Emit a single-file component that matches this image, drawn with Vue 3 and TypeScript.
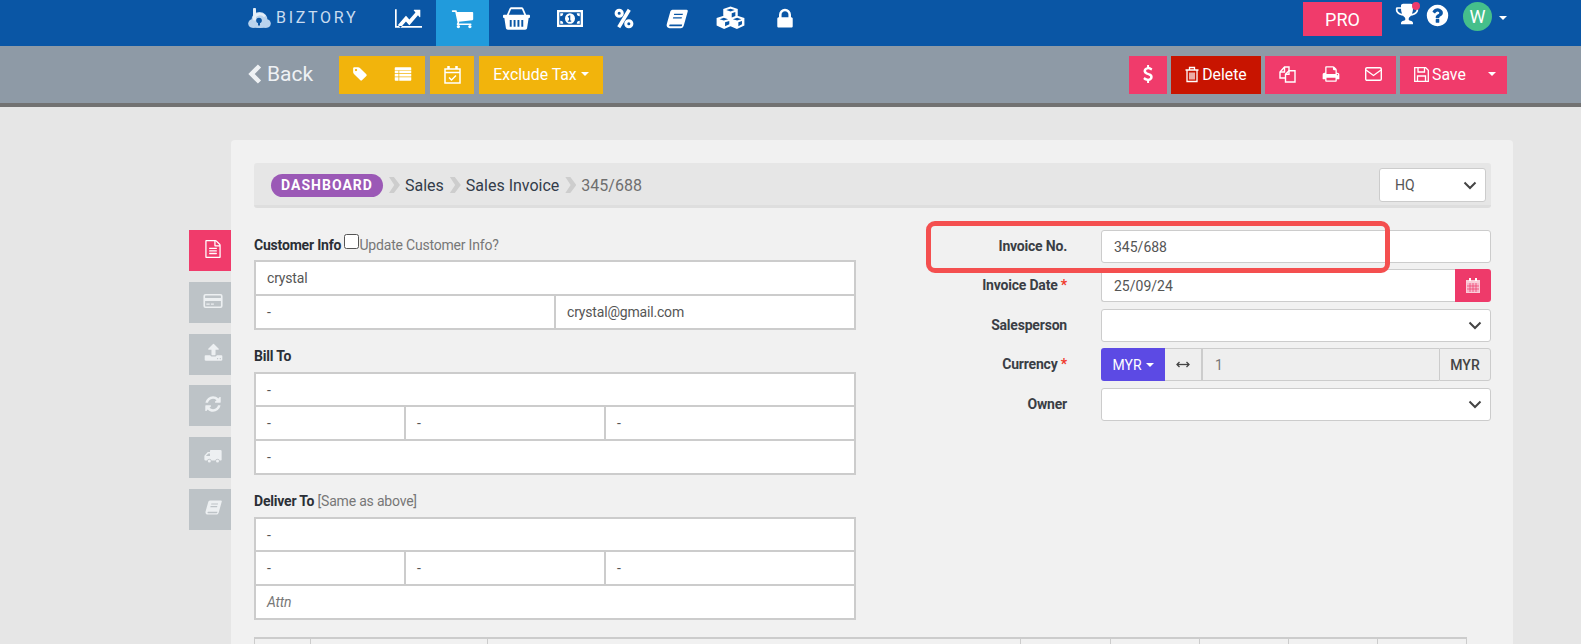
<script setup lang="ts">
import { h } from 'vue'

const paths: Record<string, [string, string]> = {
  chart: ['-128 370 2048 1240', 'M1920 1472v128h-2048v-1216h128v1088h1920zm-128-1024v435q0 21-19.5 29.5t-35.5-7.5l-121-121-633 633q-10 10-23 10t-23-10l-233-233-416 416-192-192 585-585q10-10 23-10t23 10l233 233 464-464-121-121q-16-16-7.5-35.5t29.5-19.5h435q14 0 23 9t9 23z'],
  cart: ['0 0 1792 1792', 'M704 1536q0 52-38 90t-90 38-90-38-38-90 38-90 90-38 90 38 38 90zm896 0q0 52-38 90t-90 38-90-38-38-90 38-90 90-38 90 38 38 90zm128-1088v512q0 24-16.5 42.5t-40.5 21.5l-1044 122q13 60 13 70 0 16-24 64h920q26 0 45 19t19 45-19 45-45 19h-1024q-26 0-45-19t-19-45q0-11 8-31.5t16-36 21.5-40 15.5-29.5l-177-823h-204q-26 0-45-19t-19-45 19-45 45-19h256q16 0 28.5 6.5t19.5 15.5 13 24.5 8 26 5.5 29.5 4.5 26h1201q26 0 45 19t19 45z'],
  lock: ['0 0 1792 1792', 'M640 768h512v-192q0-106-75-181t-181-75-181 75-75 181v192zm832 96v576q0 40-28 68t-68 28h-960q-40 0-68-28t-28-68v-576q0-40 28-68t68-28h32v-192q0-184 132-316t316-132 316 132 132 316v192h32q40 0 68 28t28 68z'],
  tag: ['0 0 1792 1792', 'M576 448q0-53-37.5-90.5t-90.5-37.5-90.5 37.5-37.5 90.5 37.5 90.5 90.5 37.5 90.5-37.5 37.5-90.5zm1067 576q0 53-37 90l-491 492q-39 37-91 37-53 0-90-37l-715-716q-38-37-64.5-101t-26.5-117v-416q0-52 38-90t90-38h416q53 0 117 26.5t102 64.5l715 714q37 39 37 91z'],
  dollar: ['0 0 1792 1792', 'M1362 1185q0 153-99.5 263.5t-258.5 136.5v175q0 14-9 23t-23 9h-135q-13 0-22.5-9.5t-9.5-22.5v-175q-66-9-127.5-31t-101.5-44.5-74-48-46.5-37.5-17.5-18q-17-21-2-41l103-135q7-10 23-12 15-2 24 9l2 2q113 99 243 125 37 8 74 8 81 0 142.5-43t61.5-122q0-28-15-53t-33.5-42-58.5-37.5-66-32-80-32.5q-39-16-61.5-25t-61.5-26.5-62.5-31-56.5-35.5-53.5-42.5-43.5-49-35.5-58-21-66.5-8.5-78q0-138 98-242t255-134v-180q0-13 9.5-22.5t22.5-9.5h135q14 0 23 9t9 23v176q57 6 110.5 23t87 33.5 63.5 37.5 39 29 15 14q17 18 5 38l-81 146q-8 15-23 16-14 3-27-7-3-3-14.5-12t-39-26.5-58.5-32-74.5-26-85.5-11.5q-95 0-155 43t-60 111q0 26 8.5 48t29.5 41.5 39.5 33 56 31 60.5 27 70 27.5q53 20 81 31.5t76 35 75.5 42.5 62 50 53 63.5 31.5 76.5 13 94z'],
  print: ['0 0 1792 1792', 'M448 1536h896v-256h-896v256zm0-640h896v-384h-160q-40 0-68-28t-28-68v-160h-640v640zm1152 64q0-26-19-45t-45-19-45 19-19 45 19 45 45 19 45-19 19-45zm128 0v416q0 13-9.5 22.5t-22.5 9.5h-224v160q0 40-28 68t-68 28h-960q-40 0-68-28t-28-68v-160h-224q-13 0-22.5-9.5t-9.5-22.5v-416q0-79 56.5-135.5t135.5-56.5h64v-544q0-40 28-68t68-28h672q40 0 88 20t76 48l152 152q28 28 48 76t20 88v256h64q79 0 135.5 56.5t56.5 135.5z'],
  trophy: ['0 0 1792 1792', 'M522 883q-74-162-74-371h-256v96q0 78 94.5 162t235.5 113zm1078-275v-96h-256q0 209-74 371 141-29 235.5-113t94.5-162zm128-128v128q0 71-41.5 143t-112 130-173 97.5-215.5 44.5q-42 54-95 95-38 34-52.5 72.5t-14.5 89.5q0 54 30.5 91t97.5 37q75 0 133.5 45.5t58.5 114.5v64q0 14-9 23t-23 9h-832q-14 0-23-9t-9-23v-64q0-69 58.5-114.5t133.5-45.5q67 0 97.5-37t30.5-91q0-51-14.5-89.5t-52.5-72.5q-53-41-95-95-113-5-215.5-44.5t-173-97.5-112-130-41.5-143v-128q0-40 28-68t68-28h288v-96q0-66 47-113t113-47h576q66 0 113 47t47 113v96h288q40 0 68 28t28 68z'],
  help: ['0 0 1792 1792', 'M1024 1376v-192q0-14-9-23t-23-9h-192q-14 0-23 9t-9 23v192q0 14 9 23t23 9h192q14 0 23-9t9-23zm256-672q0-88-55.5-163t-138.5-116-170-41q-243 0-371 213-15 24 8 42l132 100q7 6 19 6 16 0 25-12 53-68 86-92 34-24 86-24 48 0 85.5 26t37.5 59q0 38-20 61t-68 45q-63 28-115.5 86.5t-52.5 125.5v36q0 14 9 23t23 9h192q14 0 23-9t9-23q0-19 21.5-49.5t54.5-49.5q32-18 49-28.5t46-35 44.5-48 28-60.5 12.5-81zm384 192q0 209-103 385.5t-279.5 279.5-385.5 103-385.5-103-279.5-279.5-103-385.5 103-385.5 279.5-279.5 385.5-103 385.5 103 279.5 279.5 103 385.5z'],
  refresh: ['0 0 1792 1792', 'M1639 1056q0 5-1 7-64 268-268 434.5t-478 166.5q-146 0-282.5-55t-243.5-157l-129 129q-19 19-45 19t-45-19-19-45v-448q0-26 19-45t45-19h448q26 0 45 19t19 45-19 45l-137 137q71 66 161 102t187 36q134 0 250-65t186-179q11-17 53-117 8-23 30-23h192q13 0 22.5 9.5t9.5 22.5zm25-800v448q0 26-19 45t-45 19h-448q-26 0-45-19t-19-45 19-45l138-138q-148-137-349-137-134 0-250 65t-186 179q-11 17-53 117-8 23-30 23h-199q-13 0-22.5-9.5t-9.5-22.5v-7q65-268 270-434.5t480-166.5q146 0 284 55.5t245 156.5l130-129q19-19 45-19t45 19 19 45z'],
  upload: ['0 0 1792 1792', 'M1344 1472q0-26-19-45t-45-19-45 19-19 45 19 45 45 19 45-19 19-45zm256 0q0-26-19-45t-45-19-45 19-19 45 19 45 45 19 45-19 19-45zm128-224v320q0 40-28 68t-68 28h-1472q-40 0-68-28t-28-68v-320q0-40 28-68t68-28h427q21 56 70.5 92t110.5 36h256q61 0 110.5-36t70.5-92h427q40 0 68 28t28 68zm-325-648q-17 40-59 40h-256v448q0 26-19 45t-45 19h-256q-26 0-45-19t-19-45v-448h-256q-42 0-59-40-17-39 14-69l448-448q18-19 45-19t45 19l448 448q31 30 14 69z'],
  file: ['0 0 1792 1792', 'M1596 380q28 28 48 76t20 88v1152q0 40-28 68t-68 28h-1344q-40 0-68-28t-28-68v-1600q0-40 28-68t68-28h896q40 0 88 20t76 48zm-444-244v376h376q-10-29-22-41l-313-313q-12-12-41-22zm384 1528v-1024h-416q-40 0-68-28t-28-68v-416h-768v1536h1280zm-1024-864q0-14 9-23t23-9h704q14 0 23 9t9 23v64q0 14-9 23t-23 9h-704q-14 0-23-9t-9-23v-64zm736 224q14 0 23 9t9 23v64q0 14-9 23t-23 9h-704q-14 0-23-9t-9-23v-64q0-14 9-23t23-9h704zm0 256q14 0 23 9t9 23v64q0 14-9 23t-23 9h-704q-14 0-23-9t-9-23v-64q0-14 9-23t23-9h704z'],
  list: ['0 0 24 20', 'M1 1.500a1 1 0 0 1 1-1h20a1 1 0 0 1 1 1V4.500H1zM1 5.500h5v3.600H1zM7 5.500h16v3.600H7zM1 10.100h5v3.600H1zM7 10.100h16v3.600H7zM1 14.700h5v4.800H2a1 1 0 0 1-1-1zM7 14.700h16v3.800a1 1 0 0 1-1 1H7z'],
  card: ['0 0 24 24', 'M3 3.500h18a2.500 2.500 0 0 1 2.500 2.500v12a2.500 2.500 0 0 1-2.500 2.500H3A2.500 2.500 0 0 1 .5 18V6A2.500 2.500 0 0 1 3 3.500zM2.500 6v2.500h19V6a.5.5 0 0 0-.5-.5H3a.5.5 0 0 0-.5.5zM2.500 12v6a.5.5 0 0 0 .5.5h18a.5.5 0 0 0 .5-.5v-6zM4 15h4v1.600H4zM9.500 15H13v1.600H9.500z'],
  truck: ['0 0 24 24', 'M9 4h13a1.500 1.500 0 0 1 1.500 1.500V17a1 1 0 0 1-1 1h-1.600a3 3 0 0 0-5.800 0H10a3 3 0 0 0-5.800 0H2a1.500 1.500 0 0 1-1.500-1.500V11.500L5 6.500h3V5a1 1 0 0 1 1-1zM5.800 8.500L2.800 11.700V12H8V8.500zM7.100 16.500a2 2 0 1 1 0 4 2 2 0 0 1 0-4zM18 16.500a2 2 0 1 1 0 4 2 2 0 0 1 0-4z'],
  book: ['0 0 24 24', 'M7 2h15.500c1 0 1.500.8 1.200 1.700L19.400 19c-.5 1.700-1.500 3-3.500 3H4c-2.400 0-3.800-2-3.200-4.300L4.500 4.500C5 3 5.800 2 7 2zM9 6.200l-.4 1.500h9.500l.4-1.500zM7.900 10l-.4 1.500H17l.4-1.500zM4.500 18c-.6 0-1 .4-1 1s.4 1 1 1h11.700c.6 0 1-.4 1.200-1l.2-1z'],
  cubes: ['0 0 24 24', 'M12 .5l6 2.300v6.400l-.3.1 5.800 2.200v7.200L17.300 22l-5.300-2.600L6.700 22 .5 18.700v-7.200l5.800-2.200-.3-.1V2.800zM12 2.600L8.500 3.900 12 5.200l3.500-1.300zM13 7v4l3-1.300V5.800zM6.500 11.300L3 12.600l3.500 1.300L10 12.600zM17.500 11.300L14 12.600l3.500 1.300 3.500-1.300zM7.500 15.700v3.700l3.500-1.800v-3.200zM18.500 15.700v3.700l3-1.800v-3.200z'],
  money: ['0 0 28 20', 'M0 1h28v18H0zM2.500 3.500v13h23v-13zM14 4.600a5.400 5.400 0 1 1 0 10.800 5.400 5.400 0 0 1 0-10.800zM13.500 6.600l-2 1.400.8 1.100.6-.4v3.400h-1.200v1.300h3.600v-1.300h-1V6.600zM3.500 4.500h3.200a3.200 3.200 0 0 1-3.200 3.200zM21.300 4.500h3.200v3.200a3.200 3.200 0 0 1-3.200-3.200zM3.500 15.500v-3.200a3.200 3.200 0 0 1 3.200 3.200zM24.500 15.500h-3.200a3.200 3.200 0 0 1 3.200-3.200z'],
  basket: ['0 0 28 24', 'M6.800 1.500C7.300.6 8 .2 9 .2h10c1 0 1.700.4 2.200 1.300L24 8h3a1 1 0 0 1 1 1v1.500a1 1 0 0 1-1 1h-.4L25 22c-.2 1.100-1 1.800-2 1.800H5c-1 0-1.800-.7-2-1.800L1.400 11.500H1a1 1 0 0 1-1-1V9a1 1 0 0 1 1-1h3zM8.400 2.300L6 8h16l-2.400-5.700zM7 13.500v7h2v-7zM11 13.500v7h2v-7zM15 13.500v7h2v-7zM19 13.500v7h2v-7z']
}

const Fa = (p: { n: string; s: number; h2?: number }) => {
  const [vb, d] = paths[p.n]
  return h('svg', { viewBox: vb, width: p.s, height: p.h2 ?? p.s, fill: 'currentColor', 'fill-rule': 'evenodd', preserveAspectRatio: 'none' }, h('path', { d }))
}
Fa.props = ['n', 's', 'h2']

const nav = [
  { n: 'chart', s: 27, h2: 19 },
  { n: 'cart', s: 23, h2: 23, active: true },
  { n: 'basket', s: 27, h2: 23 },
  { n: 'money', s: 26, h2: 19 }
]
const nav2 = [
  { n: 'book', s: 22, h2: 22 },
  { n: 'cubes', s: 29, h2: 25 },
  { n: 'lock', s: 24, h2: 24 }
]
const tabs = [
  { n: 'file', s: 18, active: true },
  { n: 'card', s: 20 },
  { n: 'upload', s: 19 },
  { n: 'refresh', s: 18 },
  { n: 'truck', s: 18 },
  { n: 'book', s: 17 }
]
const addressRows = ['-', '-', '-']
</script>

<template>
  <div class="page">
    <header class="topbar">
      <div class="logo">
        <svg viewBox="0 0 23 20" width="23" height="20" fill="none">
          <circle cx="4.500" cy="15.500" r="4.300" fill="#b9d3ee" />
          <circle cx="18.500" cy="15.500" r="4.300" fill="#b9d3ee" />
          <circle cx="11.500" cy="12" r="8" fill="#b9d3ee" />
          <rect x="4.500" y="14" width="14" height="5.800" fill="#b9d3ee" />
          <path d="M6.500 1.300V11" stroke="#e4eef8" stroke-width="3" stroke-linecap="round" />
          <path d="M6.500 9C8 5.600 14 4.800 17 8.500" stroke="#e4eef8" stroke-width="2.600" fill="none" />
          <circle cx="11" cy="12.500" r="2.800" fill="#0a56a5" />
          <rect x="10" y="13.500" width="2" height="4" fill="#0a56a5" />
        </svg>
        <span class="logo-text">BIZTORY</span>
      </div>
      <nav class="nav">
        <a v-for="i in nav" :key="i.n" class="nav-item" :class="{ active: i.active }"><Fa :n="i.n" :s="i.s" :h2="i.h2" /></a>
        <a class="nav-item">
          <svg width="20" height="21" viewBox="0 0 22 24"><circle cx="5.500" cy="6" r="3.500" fill="none" stroke="#fff" stroke-width="3.500" /><circle cx="16.500" cy="18" r="3.500" fill="none" stroke="#fff" stroke-width="3.500" /><path d="M17 2L5 22" stroke="#fff" stroke-width="4" /></svg>
        </a>
        <a v-for="i in nav2" :key="i.n" class="nav-item"><Fa :n="i.n" :s="i.s" :h2="i.h2" /></a>
      </nav>
      <div class="top-right">
        <span class="pro">PRO</span>
        <span class="trophy"><Fa n="trophy" :s="24" /><i class="dot"></i></span>
        <span class="help"><Fa n="help" :s="25" /></span>
        <span class="avatar">W</span>
        <i class="caret caret-top"></i>
      </div>
    </header>

    <div class="toolbar">
      <a class="back"><svg width="14" height="20" viewBox="0 0 14 20"><path d="M11.500 2L3.500 10l8 8" fill="none" stroke="currentColor" stroke-width="4.500" /></svg>Back</a>
      <div class="btn yellow g-tag">
        <Fa n="tag" :s="16" />
        <Fa n="list" :s="18" :h2="14" />
      </div>
      <div class="btn yellow g-cal">
        <svg width="17" height="19" viewBox="0 0 17 19" fill="none" stroke="currentColor" stroke-width="1.500"><path d="M1 4h15v14H1zM1 7.500h15" /><path d="M4.500 1v3M12.500 1v3" stroke-width="2.500" /><path d="M5 12.500l2.500 2.500 4.500-4.500" /></svg>
      </div>
      <div class="btn yellow g-tax">Exclude Tax<i class="caret"></i></div>
      <div class="grow"></div>
      <div class="btn pink g-dollar"><Fa n="dollar" :s="18" /></div>
      <div class="btn red g-del">
        <svg width="14" height="17" viewBox="0 0 14 17" fill="none" stroke="currentColor" stroke-width="1.300"><path d="M.5 4h13M2 4v11.500h10V4M4.500 4V1.500h5V4M5 6.500v7M7 6.500v7M9 6.500v7" /></svg>
        Delete
      </div>
      <div class="btn pink g-tools">
        <svg width="17" height="17" viewBox="0 0 17 17" fill="none" stroke="currentColor" stroke-width="1.400"><path d="M6.500 12H1V6L5.500 1H10V4.700" /><path d="M5.500 1V6H1" /><path d="M10 4.700H16V16H6.500V8.200z" /><path d="M10 4.700V8.200H6.500" /></svg>
        <Fa n="print" :s="18" />
        <svg width="17" height="14" viewBox="0 0 17 14" fill="none" stroke="currentColor" stroke-width="1.400"><rect x=".7" y=".7" width="15.600" height="12.600" rx="1.300" /><path d="M1 3l7.500 5.500L16 3" /></svg>
      </div>
      <div class="btn pink g-save">
        <svg width="15" height="15" viewBox="0 0 15 15" fill="none" stroke="currentColor" stroke-width="1.300"><path d="M.7.700h11l2.600 2.600v11H.7z" /><path d="M3.500 14V9h8v5M4 1v4h6.500V1" /></svg>
        <span>Save</span>
        <i class="caret"></i>
      </div>
    </div>

    <main class="main">
      <aside class="tabs">
        <a v-for="t in tabs" :key="t.n" class="tab" :class="{ active: t.active }"><Fa :n="t.n" :s="t.s" /></a>
      </aside>
      <section class="card">
        <div class="crumbs">
          <span class="badge">DASHBOARD</span>
          <i class="sep"></i><span class="crumb">Sales</span>
          <i class="sep"></i><span class="crumb">Sales Invoice</span>
          <i class="sep"></i><span class="crumb last">345/688</span>
          <div class="grow"></div>
          <div class="select hq"><span>HQ</span><svg class="chev" width="14" height="9" viewBox="0 0 14 9"><path d="M1.500 1.500L7 7l5.500-5.500" fill="none" stroke="#444" stroke-width="2" /></svg></div>
        </div>

        <div class="form">
          <div class="left">
            <div class="lbl"><b>Customer Info</b> <span class="check"></span><span class="muted">Update Customer Info?</span></div>
            <div class="tbl">
              <div class="row"><div class="cell">crystal</div></div>
              <div class="row"><div class="cell w298">-</div><div class="cell">crystal@gmail.com</div></div>
            </div>

            <div class="lbl"><b>Bill To</b></div>
            <div class="tbl">
              <div class="row first"><div class="cell">-</div></div>
              <div class="row"><div v-for="(c, i) in addressRows" :key="i" class="cell" :class="'c' + i">{{ c }}</div></div>
              <div class="row"><div class="cell">-</div></div>
            </div>

            <div class="lbl"><b>Deliver To</b> <span class="muted">[Same as above]</span></div>
            <div class="tbl">
              <div class="row first"><div class="cell">-</div></div>
              <div class="row"><div v-for="(c, i) in addressRows" :key="i" class="cell" :class="'c' + i">{{ c }}</div></div>
              <div class="row"><div class="cell attn">Attn</div></div>
            </div>
          </div>

          <div class="right">
            <label class="f-lbl">Invoice No.</label>
            <div class="input">345/688</div>
            <label class="f-lbl">Invoice Date <em>*</em></label>
            <div class="group">
              <div class="input flex">25/09/24</div>
              <span class="cal"><svg width="14" height="15" viewBox="0 0 14 15" fill="currentColor"><path d="M0 2h14v13H0z" opacity=".75" /><path d="M1 5h12v9H1z" fill="#f7b7cb" /><path d="M3 0h2v3H3zM9 0h2v3H9z" /><path d="M4 5v9M7 5v9M10 5v9M1 8h12M1 11h12" stroke="#ee3a6a" stroke-width=".7" /></svg></span>
            </div>
            <label class="f-lbl">Salesperson</label>
            <div class="input select"><svg class="chev" width="14" height="9" viewBox="0 0 14 9"><path d="M1.500 1.500L7 7l5.500-5.500" fill="none" stroke="#444" stroke-width="2" /></svg></div>
            <label class="f-lbl">Currency <em>*</em></label>
            <div class="group cur">
              <span class="myr">MYR<i class="caret"></i></span>
              <span class="swap"><svg width="14" height="7" viewBox="0 0 14 7" fill="none" stroke="#444" stroke-width="1.300"><path d="M1 3.500h12" /><path d="M3.500 1L1 3.500 3.500 6M10.500 1L13 3.500 10.500 6" /></svg></span>
              <span class="rate">1</span>
              <span class="unit">MYR</span>
            </div>
            <label class="f-lbl">Owner</label>
            <div class="input select"><svg class="chev" width="14" height="9" viewBox="0 0 14 9"><path d="M1.500 1.500L7 7l5.500-5.500" fill="none" stroke="#444" stroke-width="2" /></svg></div>
          </div>
        </div>

        <div class="items">
          <div class="col" style="width: 56px"></div>
          <div class="col" style="width: 177px"></div>
          <div class="col" style="width: 533px"></div>
          <div class="col" style="width: 90px"></div>
          <div class="col" style="width: 89px"></div>
          <div class="col" style="width: 89px"></div>
          <div class="col" style="width: 89px"></div>
          <div class="col" style="width: 90px"></div>
        </div>
      </section>
    </main>

    <div class="highlight"></div>
  </div>
</template>

<style>
html, body { margin: 0; background: #e6e6e6; overflow: hidden; }
</style>

<style scoped>
.page {
  position: relative;
  width: 1581px;
  height: 644px;
  overflow: hidden;
  background: #e6e6e6;
  font-family: Roboto, "Liberation Sans", sans-serif;
  font-size: 14px;
  color: #555;
}
.grow { flex: 1; }
.topbar {
  display: flex;
  height: 46px;
  padding-left: 248px;
  padding-right: 74px;
  background: #0a56a5;
  color: #fff;
}
.logo { width: 134px; display: flex; align-items: center; gap: 5px; height: 35px; }
.logo-text { font-size: 16px; letter-spacing: 2.700px; color: #c9dcf0; font-weight: 400; }
.nav { display: flex; }
.nav-item {
  width: 53.7px;
  height: 46px;
  display: flex;
  align-items: center;
  justify-content: center;
  padding-bottom: 9px;
  box-sizing: border-box;
  color: #fff;
}
.nav-item.active { background: #219bdc; }
.top-right { margin-left: auto; display: flex; align-items: flex-start; position: relative; }
.pro {
  margin-top: 2px;
  width: 79px;
  height: 34px;
  background: #f03b6b;
  display: flex;
  align-items: center;
  justify-content: center;
  font-size: 18px;
}
.trophy { position: relative; margin: 2px 0 0 13px; height: 24px; }
.dot { position: absolute; right: -1px; top: 0; width: 8px; height: 8px; border-radius: 50%; background: #f03b6b; }
.help { margin: 3px 0 0 6px; }
.avatar {
  margin: 2px 0 0 13px;
  width: 29px;
  height: 29px;
  border-radius: 50%;
  background: #45bf8b;
  display: flex;
  align-items: center;
  justify-content: center;
  font-size: 18px;
}
.caret {
  display: inline-block;
  width: 0;
  height: 0;
  margin-left: 4px;
  vertical-align: middle;
  border-top: 4px solid currentColor;
  border-left: 4px solid transparent;
  border-right: 4px solid transparent;
}
.caret-top { margin: 16px 0 0 7px; }

.toolbar {
  display: flex;
  padding: 10px 74px 9px 248px;
  height: 38px;
  background: #8e9aa6;
  border-bottom: 4px solid #727272;
  color: #fff;
}
.back {
  width: 91px;
  display: flex;
  align-items: center;
  gap: 5px;
  font-size: 21px;
  color: #eef1f4;
  padding-bottom: 2px;
  box-sizing: border-box;
}
.btn {
  display: flex;
  align-items: center;
  height: 38px;
  font-size: 15.800px;
  color: #fff;
  box-sizing: border-box;
  padding-bottom: 2px;
}
.yellow { background: #f2b40c; }
.pink { background: #f03b6b; }
.red { background: #c81400; }
.g-tag { width: 86px; justify-content: space-between; padding: 0 13px 2px 13px; margin-right: 5px; }
.g-cal { width: 44px; justify-content: center; margin-right: 5px; }
.g-tax { width: 124px; justify-content: center; }
.g-dollar { width: 38px; justify-content: center; margin-right: 4px; }
.g-del { width: 90px; justify-content: center; gap: 3px; margin-right: 4px; }
.g-tools { width: 131px; justify-content: space-between; padding: 0 14px 2px 14px; margin-right: 4px; }
.g-save { width: 107px; padding: 0 8px 2px 14px; gap: 3px; }
.g-save .caret { margin-left: auto; margin-right: 3px; }

.main {
  display: flex;
  padding-left: 189px;
}
.tabs {
  width: 42px;
  padding-top: 123px;
  display: flex;
  flex-direction: column;
  gap: 10.800px;
}
.tab {
  height: 41px;
  background: #bdc3c7;
  color: #edf0f2;
  display: flex;
  align-items: center;
  justify-content: center;
  padding-left: 6px;
  box-sizing: border-box;
  padding-bottom: 3px;
}
.tab.active { background: #f03b6b; color: #fff; }

.card {
  margin-top: 33px;
  width: 1282px;
  height: 560px;
  box-sizing: border-box;
  padding: 23px 22px 0 23px;
  background: #f1f1f1;
  border-radius: 4px 4px 0 0;
}
.crumbs {
  height: 45px;
  box-sizing: border-box;
  width: 1237px;
  padding: 2px 5px 0 17px;
  background: #e6e6e6;
  border-bottom: 3px solid #dedede;
  border-radius: 3px;
  display: flex;
  align-items: center;
  gap: 5px;
}
.badge {
  width: 112px;
  height: 23px;
  border-radius: 12px;
  background: #9b59b6;
  color: #fff;
  font-weight: 700;
  font-size: 14px;
  letter-spacing: 1px;
  display: flex;
  align-items: center;
  justify-content: center;
}
.sep {
  width: 11px;
  height: 16px;
  margin-left: 1px;
  background: #cdcdcd;
  clip-path: polygon(0 0, 45% 0, 100% 50%, 45% 100%, 0 100%, 48% 50%);
}
.crumb { font-size: 16px; color: #333c4a; }
.crumb.last { color: #6f6f6f; }
.select { position: relative; }
.hq {
  width: 107px;
  height: 34px;
  box-sizing: border-box;
  background: #fff;
  border: 1px solid #ccc;
  border-radius: 3px;
  display: flex;
  align-items: center;
  padding-left: 15px;
}
.chev { position: absolute; right: 8px; top: 50%; margin-top: -4px; }

.form { display: flex; padding-top: 22px; }
.left { flex: none; width: 602px; padding-top: 4px; }
.lbl { height: 20px; line-height: 20px; margin-bottom: 6px; color: #2b2f36; white-space: nowrap; letter-spacing: -0.2px; }
.lbl b { font-weight: 700; }
.check {
  display: inline-block;
  width: 13px;
  height: 13px;
  border: 1px solid #555;
  border-radius: 2.500px;
  background: #fff;
  vertical-align: 1px;
}
.muted { color: #777; }
.tbl { border: 2px solid #ccc; background: #fff; margin-bottom: 16px; }
.row { display: flex; height: 34px; box-sizing: border-box; border-top: 2px solid #ccc; }
.row:first-child { border-top: 0; height: 32px; }
.row.first { height: 31px; }
.cell { flex: 1; display: flex; align-items: center; padding-left: 11px; box-sizing: border-box; color: #555; border-left: 2px solid #ccc; min-width: 0; letter-spacing: -0.18px; }
.cell:first-child { border-left: 0; }
.cell.w298 { flex: 0 0 298px; }
.cell.c0 { flex: 0 0 148px; }
.cell.c1 { flex: 0 0 200px; }
.attn { font-style: italic; color: #777; }

.right {
  margin-left: 70px;
  flex: none;
  display: grid;
  grid-template-columns: 141px 390px;
  column-gap: 34px;
  row-gap: 6.400px;
  align-content: start;
}
.f-lbl {
  font-weight: 700;
  font-size: 14px;
  letter-spacing: -0.2px;
  color: #3a3e45;
  text-align: right;
  line-height: 33px;
  height: 33px;
}
.f-lbl em { color: #f0392b; font-style: normal; }
.input {
  height: 33px;
  box-sizing: border-box;
  background: #fff;
  border: 1px solid #ccc;
  border-radius: 3px;
  display: flex;
  align-items: center;
  padding-left: 12px;
  color: #555;
}
.group { display: flex; height: 33px; }
.flex { flex: 1; border-radius: 3px 0 0 3px; border-right: 0; }
.cal {
  width: 36px;
  background: #ee3a6a;
  color: #fff;
  border-radius: 0 3px 3px 0;
  display: flex;
  align-items: center;
  justify-content: center;
}
.cur { border-radius: 3px; }
.myr {
  width: 64px;
  background: #5c4ae4;
  color: #fff;
  border-radius: 3px 0 0 3px;
  display: flex;
  align-items: center;
  justify-content: center;
}
.swap {
  width: 38px;
  background: #eee;
  border: 1px solid #ccc;
  border-left: 0;
  border-right: 2px solid #ccc;
  box-sizing: border-box;
  display: flex;
  align-items: center;
  justify-content: center;
}
.rate {
  flex: 1;
  background: #eee;
  border-top: 1px solid #ccc;
  border-bottom: 1px solid #ccc;
  display: flex;
  align-items: center;
  padding-left: 12px;
  color: #777;
}
.unit {
  width: 52px;
  box-sizing: border-box;
  background: #eee;
  border: 1px solid #ccc;
  border-radius: 0 3px 3px 0;
  display: flex;
  align-items: center;
  justify-content: center;
  color: #444;
  font-weight: 500;
}
.items {
  display: flex;
  width: 1213px;
  height: 40px;
  margin-top: 1px;
  box-sizing: border-box;
  border-top: 2px solid #ccc;
  border-left: 1px solid #ccc;
  border-right: 1px solid #ccc;
}
.col { box-sizing: border-box; border-right: 1px solid #ccc; }
.col:last-child { flex: 1; border-right: 0; }
.highlight {
  position: absolute;
  left: 926px;
  top: 221px;
  width: 464px;
  height: 52px;
  box-sizing: border-box;
  border: 5px solid #f44f4f;
  border-radius: 9px;
}
</style>
